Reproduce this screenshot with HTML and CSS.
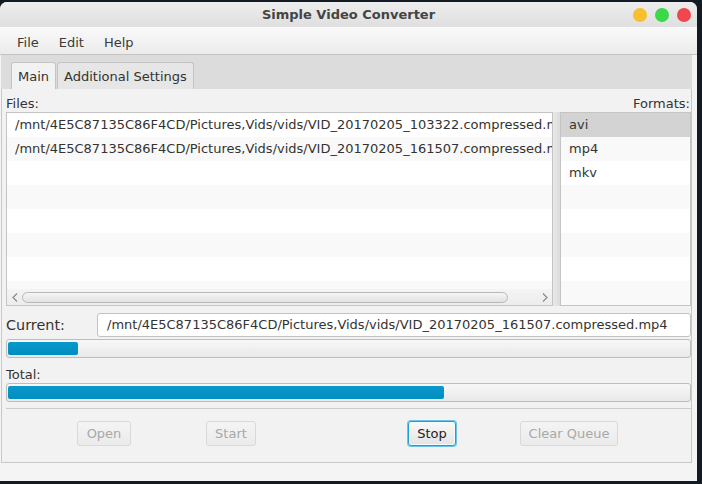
FILE: index.html
```html
<!DOCTYPE html>
<html>
<head>
<meta charset="utf-8">
<link rel="stylesheet" href="styles.css">
</head>
<body>
<div class="window">
  <div class="titlebar">
    <span class="title">Simple Video Converter</span>
    <div class="lights">
      <span class="light yellow"></span>
      <span class="light green"></span>
      <span class="light red"></span>
    </div>
  </div>
  <div class="menubar">
    <span class="menu">File</span>
    <span class="menu">Edit</span>
    <span class="menu">Help</span>
  </div>
  <div class="tabpane">
    <div class="tabheader">
      <div class="tab selected">Main</div>
      <div class="tab">Additional Settings</div>
    </div>
    <div class="tabcontent">
      <div class="labels">
        <span>Files:</span>
        <span>Formats:</span>
      </div>
      <div class="lists">
        <div class="listview files">
          <div class="rows">
            <div class="row">/mnt/4E5C87135C86F4CD/Pictures,Vids/vids/VID_20170205_103322.compressed.mp4</div>
            <div class="row odd">/mnt/4E5C87135C86F4CD/Pictures,Vids/vids/VID_20170205_161507.compressed.mp4</div>
            <div class="row"></div>
            <div class="row odd"></div>
            <div class="row"></div>
            <div class="row odd"></div>
            <div class="row"></div>
            <div class="row odd"></div>
          </div>
          <div class="hscroll">
            <div class="sbtn"><svg width="6" height="9" viewBox="0 0 6 9"><path d="M5 0.5 L1 4.5 L5 8.5" fill="none" stroke="#8a8a8a" stroke-width="1.2"/></svg></div>
            <div class="strack"><div class="thumb"></div></div>
            <div class="sbtn"><svg width="6" height="9" viewBox="0 0 6 9"><path d="M1 0.5 L5 4.5 L1 8.5" fill="none" stroke="#8a8a8a" stroke-width="1.2"/></svg></div>
          </div>
        </div>
        <div class="divider"></div>
        <div class="listview formats">
          <div class="rows">
            <div class="row sel">avi</div>
            <div class="row odd">mp4</div>
            <div class="row">mkv</div>
            <div class="row odd"></div>
            <div class="row"></div>
            <div class="row odd"></div>
            <div class="row"></div>
            <div class="row odd"></div>
          </div>
        </div>
      </div>
      <div class="current">
        <span class="current-label">Current:</span>
        <div class="textfield">/mnt/4E5C87135C86F4CD/Pictures,Vids/vids/VID_20170205_161507.compressed.mp4</div>
      </div>
      <div class="progress first"><div class="fill" style="width:70px"></div></div>
      <div class="total-label">Total:</div>
      <div class="progress"><div class="fill" style="width:436px"></div></div>
      <div class="separator"></div>
      <div class="buttons">
        <button class="btn disabled b-open">Open</button>
        <button class="btn disabled b-start">Start</button>
        <button class="btn focused b-stop">Stop</button>
        <button class="btn disabled b-clear">Clear Queue</button>
      </div>
    </div>
  </div>
</div>
</body>
</html>
```

FILE: styles.css
```css
* { box-sizing: border-box; }
html, body { margin: 0; padding: 0; }
body {
  background: #121a24;
  width: 702px;
  height: 484px;
  overflow: hidden;
  font-family: "DejaVu Sans", sans-serif;
  font-size: 13px;
  color: #333;
}
.window {
  margin-top: 2px;
  width: 697px;
  height: 479px;
  background: #f4f4f4;
  border-radius: 7px 7px 0 0;
  overflow: hidden;
  display: flex;
  flex-direction: column;
}
.titlebar {
  height: 25px;
  flex: none;
  background: linear-gradient(#ededed, #dfdfdf);
  display: grid;
  grid-template-columns: 1fr auto 1fr;
  align-items: center;
}
.title {
  grid-column: 2;
  font-weight: bold;
  font-size: 13px;
  color: #444;
}
.lights {
  grid-column: 3;
  justify-self: end;
  display: flex;
  gap: 8px;
  padding-right: 6px;
}
.light { width: 14px; height: 14px; border-radius: 50%; }
.yellow { background: #f8bf2e; }
.green { background: #3bd84a; }
.red { background: #f2464e; }

.menubar {
  height: 28px;
  flex: none;
  background: linear-gradient(#fafafa, #ebebeb);
  border-bottom: 1px solid #c4c4c4;
  display: flex;
  align-items: center;
  padding: 4px 0 0 7px;
}
.menu { padding: 0 10px; color: #3a3a3a; }

.tabpane {
  width: 692px;
  display: flex;
  flex-direction: column;
}
.tabheader {
  height: 34px;
  margin-left: 1px;
  width: 691px;
  background: #dcdcdc;
  display: flex;
  align-items: flex-end;
  gap: 1px;
  padding-left: 10px;
}
.tab {
  height: 27px;
  padding: 0 6px;
  border: 1px solid #c4c4c4;
  border-bottom: none;
  border-radius: 3px 3px 0 0;
  background: #e6e6e6;
  display: flex;
  align-items: center;
}
.tab.selected { background: #f2f2f2; }

.tabcontent {
  margin-left: 1px;
  width: 691px;
  height: 374px;
  border: 1px solid #c8c8c8;
  border-top: none;
  background: #f2f2f2;
  padding: 7px 0 0 4px;
  display: flex;
  flex-direction: column;
}
.labels {
  height: 15px;
  line-height: 15px;
  display: flex;
  justify-content: space-between;
  padding-right: 1px;
  margin-bottom: 1px;
}
.lists {
  height: 194px;
  display: flex;
}
.listview {
  border: 1px solid #c4c4c4;
  background: #fff;
  display: flex;
  flex-direction: column;
  overflow: hidden;
}
.listview.files { width: 547px; }
.listview.formats { width: 131px; }
.divider {
  width: 7px;
  background: linear-gradient(90deg, #e8e8e8, #dcdcdc);
}
.rows { flex: 1; overflow: hidden; }
.row {
  height: 24px;
  line-height: 24px;
  padding-left: 8px;
  white-space: nowrap;
  overflow: hidden;
  background: #fff;
}
.row.odd { background: #f9f9f9; }
.row.sel { background: #d3d3d3; }

.hscroll {
  height: 16px;
  flex: none;
  background: linear-gradient(#f4f4f4, #ececec);
  display: flex;
  align-items: stretch;
}
.sbtn {
  width: 15px;
  display: flex;
  align-items: center;
  justify-content: center;
}
.strack { flex: 1; padding: 3px 0 2px 0; }
.thumb {
  width: 486px;
  height: 11px;
  border: 1px solid #b8b8b8;
  border-radius: 6px;
  background: linear-gradient(#f5f5f5, #e2e2e2);
}

.current {
  margin-top: 7px;
  height: 24px;
  display: grid;
  grid-template-columns: 91px 1fr;
  align-items: center;
}
.current-label { font-size: 14.4px; color: #333; }
.textfield {
  height: 24px;
  line-height: 22px;
  border: 1px solid #c2c2c2;
  border-radius: 3px;
  background: #fff;
  padding-left: 9px;
  white-space: nowrap;
  overflow: hidden;
}
.progress {
  height: 19px;
  border: 1px solid #bdbdbd;
  border-radius: 3px;
  background: linear-gradient(#f7f7f7, #e9e9e9);
  padding: 2px 1px;
}
.progress.first { margin-top: 2px; }
.fill {
  height: 13px;
  border-radius: 2px;
  background: linear-gradient(#0a98cb, #008ec0);
}
.total-label {
  margin-top: 9px;
  height: 15px;
  line-height: 15px;
  margin-bottom: 1px;
}
.separator {
  margin-top: 6px;
  height: 1px;
  background: #cdcdcd;
}
.buttons {
  margin-top: 12px;
  height: 25px;
  display: flex;
}
.btn {
  font-family: "DejaVu Sans", sans-serif;
  font-size: 13px;
  height: 25px;
  padding: 0;
  text-align: center;
  border: 1px solid #c0c0c0;
  border-radius: 3px;
  background: linear-gradient(#f9f9f9, #e4e4e4);
  color: #222;
}
.btn.disabled {
  color: #a8a8a8;
  border-color: #d9d9d9;
  background: linear-gradient(#f4f4f4, #ebebeb);
}
.btn.focused {
  border: 1px solid #1ba0d6;
  box-shadow: 0 0 0 1px #6cc3e6, inset 0 0 0 1px #f4fbfe;
}
.b-open { width: 54px; margin-left: 71px; }
.b-start { width: 50px; margin-left: 75px; }
.b-stop { width: 48px; margin-left: 152px; }
.b-clear { width: 98px; margin-left: 64px; }
```
